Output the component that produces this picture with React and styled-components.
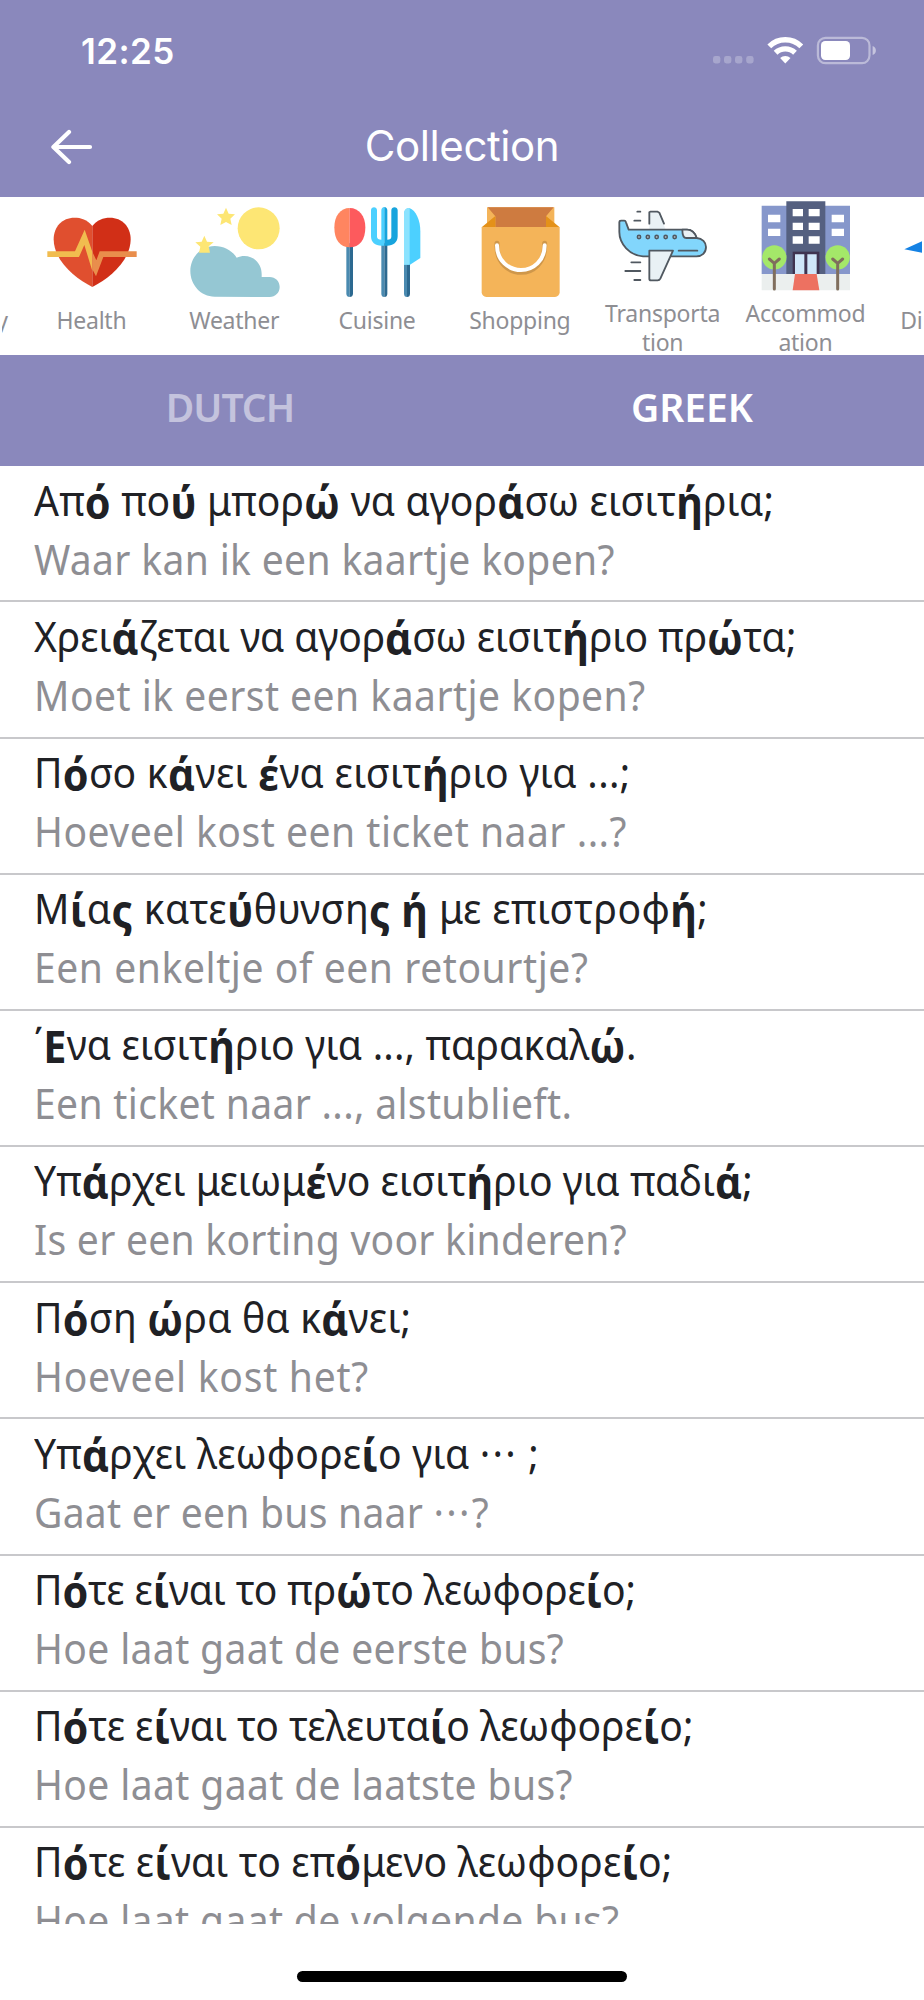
import { useState } from 'react';
import styled, { createGlobalStyle } from 'styled-components';

const GlobalStyle = createGlobalStyle`
  * {
    box-sizing: border-box;
  }

  body {
    margin: 0;
    background: #fff;
    font-family: 'Noto Sans', sans-serif;
  }
`;

const Screen = styled.div`
  display: flex;
  flex-direction: column;
  width: 924px;
  height: 2000px;
  overflow: hidden;
  background: #fff;
`;

const Header = styled.header`
  flex: none;
  height: 197px;
  background: #8a88bc;
  color: #fff;
  font-family: Inter, sans-serif;
`;

const StatusBar = styled.div`
  display: flex;
  align-items: center;
  justify-content: space-between;
  height: 101px;
  padding: 0 47px 0 81px;
`;

const Clock = styled.span`
  font-size: 35px;
  font-weight: 600;
  letter-spacing: 0.4px;
`;

const NavBar = styled.div`
  display: grid;
  grid-template-columns: 93px 1fr 93px;
  align-items: center;
  height: 91px;
`;

const BackButton = styled.button`
  display: flex;
  justify-content: flex-end;
  padding: 0;
  border: none;
  background: none;
`;

const Title = styled.h1`
  margin: 0;
  padding-bottom: 2px;
  font-size: 42px;
  font-weight: 400;
  letter-spacing: -0.4px;
  text-align: center;
`;

const Strip = styled.nav`
  display: flex;
  flex: none;
  height: 158px;
  margin: 0 2px;
  overflow: hidden;

  &::before {
    content: '';
    flex: none;
    width: 0;
    margin-left: -124px;
  }
`;

const Category = styled.div`
  display: flex;
  flex: none;
  flex-direction: column;
  align-items: center;
  width: 142.8px;
  padding-top: ${({ $tall }) => ($tall ? '3.7px' : '10px')};
`;

const CategoryIcon = styled.svg`
  flex: none;
  width: 90px;
  height: 90px;
`;

const CategoryLabel = styled.span`
  margin-top: 8.7px;
  padding-right: 1.5px;
  color: #8e8e93;
  font-size: 23px;
  line-height: 28.5px;
  letter-spacing: -0.25px;
  text-align: center;
  white-space: pre;
`;

const Tabs = styled.div`
  display: flex;
  flex: none;
  height: 111.3px;
  background: #8a88bc;
`;

const Tab = styled.button`
  flex: 1;
  padding: 0 2px 8px 0;
  border: none;
  background: none;
  color: ${({ $active }) => ($active ? '#fff' : 'rgba(255, 255, 255, 0.5)')};
  font-family: inherit;
  font-size: 39px;
  font-weight: 600;
  letter-spacing: ${({ $active }) => ($active ? '0' : '-1px')};
`;

const PhraseList = styled.main`
  flex: 1;
  overflow: hidden;
`;

const Phrase = styled.section`
  height: 136.16px;
  padding: 4.4px 34px 0;
  border-bottom: 2px solid #c8c8cb;
  white-space: nowrap;
`;

const Line = styled.p`
  margin: 0;
  font-size: 42px;
  letter-spacing: ${({ $spacing }) => $spacing}px;
  transform: scaleX(0.93);
  transform-origin: left;
`;

const GreekLine = styled(Line)`
  color: #202125;
  line-height: 58px;
`;

const DutchLine = styled(Line)`
  color: #8e8e93;
  line-height: 59.6px;
`;

const Stressed = styled.b`
  font-size: 44.5px;
  line-height: 0;
  vertical-align: -2.7px;
`;

const Dots = styled.span`
  letter-spacing: 2.4px;
`;

const HomeArea = styled.footer`
  display: flex;
  flex: none;
  justify-content: center;
  height: 76px;
  padding-top: 47px;
`;

const HomeIndicator = styled.div`
  width: 330px;
  height: 11px;
  border-radius: 6px;
  background: #000;
`;

const StatusIcons = () => (
  <svg width="164" height="29" viewBox="713 36 164 29" fill="#fff">
    <g opacity="0.25">
      <rect x="713" y="56" width="7.4" height="7.4" rx="2.4" />
      <rect x="724" y="56" width="7.4" height="7.4" rx="2.4" />
      <rect x="735" y="56" width="7.4" height="7.4" rx="2.4" />
      <rect x="746.2" y="56" width="7.4" height="7.4" rx="2.4" />
    </g>
    <g fill="none" stroke="#fff" strokeWidth="5.4">
      <path d="M769.3 46.4a22.6 22.6 0 0 1 32 0" />
      <path d="M775.6 52.8a14 14 0 0 1 19.4 0" />
    </g>
    <path d="M785.3 63.5l-5.2-5.4a7.7 7.7 0 0 1 10.4 0z" />
    <rect
      x="817.9"
      y="37.9"
      width="51.6"
      height="25.2"
      rx="7.5"
      fill="none"
      stroke="#fff"
      strokeWidth="2.2"
      opacity="0.42"
    />
    <path d="M872.6 46c4.4 1.4 4.4 7.6 0 9z" opacity="0.5" />
    <rect x="821" y="41" width="29" height="19" rx="4.2" />
  </svg>
);

const BackArrow = () => (
  <svg width="42" height="36" viewBox="51 128.5 42 36" fill="none">
    <path
      d="M69 131.5L53.4 146.5L69 161.5M54 146.5H90"
      stroke="#fff"
      strokeWidth="4.2"
      strokeLinecap="round"
      strokeLinejoin="round"
    />
  </svg>
);

const Health = () => (
  <CategoryIcon viewBox="142 51 270 270">
    <path
      fill="#e04f2f"
      d="M278 108C262 88 244 83 224 83C188 83 162 110 162 148C162 212 228 266 278 291z"
    />
    <path
      fill="#d12f17"
      d="M278 108C292 90 310 83 331 83C367 83 393 110 393 148C393 212 328 266 278 291z"
    />
    <path
      fill="#f1bc4f"
      d="M143 184H226L255 119L278 185V243L254 165L238 201H143z"
    />
    <path fill="#e98e4c" d="M278 185L290 211L300 184H411V201H311L289 259L278 238z" />
  </CategoryIcon>
);

const Weather = () => (
  <CategoryIcon viewBox="571 51 270 270">
    <circle cx="777" cy="115" r="63" fill="#fde674" />
    <path
      fill="#95c7d3"
      d="M645 320C603 320 572 284 572 243C572 201 605 168 645 168C673 168 698 182 711 203C748 187 786 212 786 252V261H810C827 261 840 274 840 291C840 308 827 321 810 321z"
    />
    <path
      fill="#fde674"
      d="M679 53L687 71L706 73L692 86L696 105L679 96L662 105L666 86L652 73L671 71z"
    />
    <path
      fill="#fde674"
      d="M614 137L622 155L642 157L627 169L631 188L598 188L602 170L587 157L606 155z"
    />
  </CategoryIcon>
);

const Cuisine = () => (
  <CategoryIcon viewBox="71 51 270 270">
    <path fill="#4a8ab0" d="M111 160H121V321C115 321 111 317 111 311z" />
    <path fill="#2c6990" d="M121 160H131V311C131 317 127 321 121 321z" />
    <path
      fill="#ff8560"
      d="M121 54C93 54 75 78 75 112C75 150 92 172 121 172z"
    />
    <path
      fill="#fd5a5d"
      d="M121 54C149 54 168 78 168 112C168 150 151 172 121 172z"
    />
    <path fill="#4a8ab0" d="M216 160H225V321C219 321 216 317 216 311z" />
    <path fill="#2c6990" d="M225 160H234V311C234 317 231 321 225 321z" />
    <path
      fill="#4cd0ff"
      d="M185 61C185 49 203 49 203 61V140C203 146 208 149 216 149V61C216 55 220 51 225 51V167H217C197 167 185 157 185 139z"
    />
    <path
      fill="#17a4dd"
      d="M225 51C230 51 234 55 234 61V149C242 149 246 146 246 140V61C246 49 265 49 265 61V139C265 157 252 167 233 167H225z"
    />
    <path fill="#4a8ab0" d="M284 218H293V321C287 321 284 317 284 311z" />
    <path fill="#2c6990" d="M293 218H302V311C302 317 299 321 293 321z" />
    <path
      fill="#4cd0ff"
      d="M300 54C320 61 333 91 333 124V204L302 224H284V72C284 60 291 54 300 54z"
    />
    <path fill="#8be3ff" d="M301 54V224H284V72C284 60 291 54 301 54z" />
  </CategoryIcon>
);

const Shopping = () => (
  <CategoryIcon viewBox="498 51 270 270">
    <path fill="#f4b459" d="M531 52H733V112H531z" />
    <path fill="#ce7b40" d="M533 52H731L708 79V113H556V79z" />
    <path fill="#e49119" d="M515 112L556 78V112zM749 112L708 78V112z" />
    <path
      fill="#f4b459"
      d="M515 111H749V307C749 315 743 321 735 321H529C521 321 515 315 515 307z"
    />
    <g fill="none" strokeLinecap="round">
      <path
        d="M561 160V168C561 218 596 247 633 247C670 247 704 218 704 168V160"
        stroke="#cf974a"
        strokeWidth="15"
      />
      <path
        d="M561 166C561 212 596 240 633 240C670 240 704 212 704 166"
        stroke="#fff"
        strokeWidth="12"
      />
    </g>
  </CategoryIcon>
);

const Transportation = () => (
  <CategoryIcon viewBox="57 32 270 270">
    <g stroke="#505860" strokeWidth="5.5" strokeLinecap="round" strokeLinejoin="round">
      <path
        fill="#e9f1f5"
        stroke="none"
        d="M151 118V66L155 64H176L181 67L200 118z"
      />
      <path fill="none" d="M151 100V66L154 64H176L181 67L195 100" />
      <path
        fill="#82d6fc"
        d="M61 95C61 92 63 91 66 91H76C79 91 80 93 81 96L89 118H264C278 118 288 128 293 143C310 144 321 156 321 170C321 187 309 198 292 198H132C92 196 61 160 61 125z"
      />
      <path
        fill="#e9f1f5"
        d="M250 118H264C278 118 288 128 293 143H262C252 143 250 130 250 118z"
      />
      <path fill="none" d="M239 181H295" />
      <path
        fill="#e9f1f5"
        d="M151 181H222L184 265C182 269 180 270 176 270H156C152 270 151 268 151 265z"
      />
      <path
        fill="none"
        d="M115 64H124M106 91H124M97 216H124M79 242H124M106 269H124"
      />
      <g fill="#9fb2bd" strokeWidth="4.5">
        <circle cx="120" cy="140" r="5" />
        <circle cx="146.500" cy="140" r="5" />
        <circle cx="173" cy="140" r="5" />
        <circle cx="200" cy="140" r="5" />
        <circle cx="227" cy="140" r="5" />
      </g>
    </g>
  </CategoryIcon>
);

const Accommodation = () => (
  <CategoryIcon viewBox="485 32 270 270">
    <path fill="#8697cb" d="M487 46H752V251H487z" />
    <path fill="#ebefee" d="M487 251H752V300H487z" />
    <path fill="#556080" d="M561 33H678V251H561z" />
    <path
      fill="#fff"
      d="M506 73H543V96H506zM506 115H543V137H506zM697 73H734V96H697zM697 115H734V137H697zM580 56H611V78H580zM628 56H661V78H628zM580 97H611V119H580zM628 97H661V119H628zM580 138H611V160H580zM628 138H661V160H628z"
    />
    <path fill="#3f3350" d="M580 184H660V251H580z" />
    <path fill="#cfe6f9" d="M587 192H615V251H587zM624 192H652V251H624z" />
    <path fill="#ed7161" d="M587 251H652L660 300H580z" />
    <circle cx="525" cy="201" r="36.500" fill="#a4e869" />
    <circle cx="715" cy="201" r="36.500" fill="#a4e869" />
    <g fill="none" stroke="#7f6e5d" strokeWidth="9" strokeLinecap="round">
      <path d="M525 296V219M510 206L525 219L540 206" />
      <path d="M715 296V219M700 206L715 219L730 206" />
    </g>
  </CategoryIcon>
);

const Direction = () => (
  <CategoryIcon viewBox="914 51 270 270">
    <path fill="#1582e4" d="M915 178L1180 56L1050 318L1020 199z" />
  </CategoryIcon>
);

const categories = [
  { label: 'Emergency', Icon: CategoryIcon },
  { label: 'Health', Icon: Health },
  { label: 'Weather', Icon: Weather },
  { label: 'Cuisine', Icon: Cuisine },
  { label: 'Shopping', Icon: Shopping },
  { label: 'Transporta\ntion', Icon: Transportation, tall: true },
  { label: 'Accommod\nation', Icon: Accommodation, tall: true },
  { label: 'Direction', Icon: Direction },
];

// gs / ds: letter spacing of the Greek and the Dutch line
const phrases = [
  {
    greek: 'Από πού μπορώ να αγοράσω εισιτήρια;',
    dutch: 'Waar kan ik een kaartje kopen?',
    gs: 0.18,
    ds: 0.35,
  },
  {
    greek: 'Χρειάζεται να αγοράσω εισιτήριο πρώτα;',
    dutch: 'Moet ik eerst een kaartje kopen?',
    gs: -0.04,
    ds: 0.5,
  },
  {
    greek: 'Πόσο κάνει ένα εισιτήριο για ...;',
    dutch: 'Hoeveel kost een ticket naar ...?',
    gs: 0.31,
    ds: 0.54,
  },
  {
    greek: 'Μίας κατεύθυνσης ή με επιστροφή;',
    dutch: 'Een enkeltje of een retourtje?',
    gs: 0.44,
    ds: 0.6,
  },
  {
    greek: '΄Ενα εισιτήριο για ..., παρακαλώ.',
    dutch: 'Een ticket naar ..., alstublieft.',
    gs: 0.19,
    ds: 0.35,
  },
  {
    greek: 'Υπάρχει μειωμένο εισιτήριο για παδιά;',
    dutch: 'Is er een korting voor kinderen?',
    gs: 0.05,
    ds: 0.27,
  },
  {
    greek: 'Πόση ώρα θα κάνει;',
    dutch: 'Hoeveel kost het?',
    gs: 0.18,
    ds: 0.78,
  },
  {
    greek: 'Υπάρχει λεωφορείο για ··· ;',
    dutch: 'Gaat er een bus naar ···?',
    gs: 0.2,
    ds: 0.26,
  },
  {
    greek: 'Πότε είναι το πρώτο λεωφορείο;',
    dutch: 'Hoe laat gaat de eerste bus?',
    gs: -0.18,
    ds: 0.38,
  },
  {
    greek: 'Πότε είναι το τελευταίο λεωφορείο;',
    dutch: 'Hoe laat gaat de laatste bus?',
    gs: -0.05,
    ds: 0.4,
  },
  {
    greek: 'Πότε είναι το επόμενο λεωφορείο;',
    dutch: 'Hoe laat gaat de volgende bus?',
    gs: 0.12,
    ds: 0.37,
  },
];

// accented vowels, final sigma and the capital of Ένα are set bold
const markText = (text) =>
  text.split(/([άέήίόύώςΕ]|···)/).map((part, i) => {
    if (i % 2 === 0) return part;
    if (part === '···') return <Dots key={i}>{part}</Dots>;
    return <Stressed key={i}>{part}</Stressed>;
  });

function App() {
  const [language, setLanguage] = useState('Greek');

  return (
    <Screen>
      <GlobalStyle />
      <Header>
        <StatusBar>
          <Clock>12:25</Clock>
          <StatusIcons />
        </StatusBar>
        <NavBar>
          <BackButton aria-label="Back">
            <BackArrow />
          </BackButton>
          <Title>Collection</Title>
        </NavBar>
      </Header>
      <Strip>
        {categories.map(({ label, Icon, tall }) => (
          <Category key={label} $tall={tall}>
            <Icon />
            <CategoryLabel>{label}</CategoryLabel>
          </Category>
        ))}
      </Strip>
      <Tabs>
        {['Dutch', 'Greek'].map((name) => (
          <Tab
            key={name}
            $active={language === name}
            onClick={() => setLanguage(name)}
          >
            {name.toUpperCase()}
          </Tab>
        ))}
      </Tabs>
      <PhraseList>
        {phrases.map(({ greek, dutch, gs, ds }) => (
          <Phrase key={greek}>
            <GreekLine $spacing={gs}>{markText(greek)}</GreekLine>
            <DutchLine $spacing={ds}>{markText(dutch)}</DutchLine>
          </Phrase>
        ))}
      </PhraseList>
      <HomeArea>
        <HomeIndicator />
      </HomeArea>
    </Screen>
  );
}

export default App;
